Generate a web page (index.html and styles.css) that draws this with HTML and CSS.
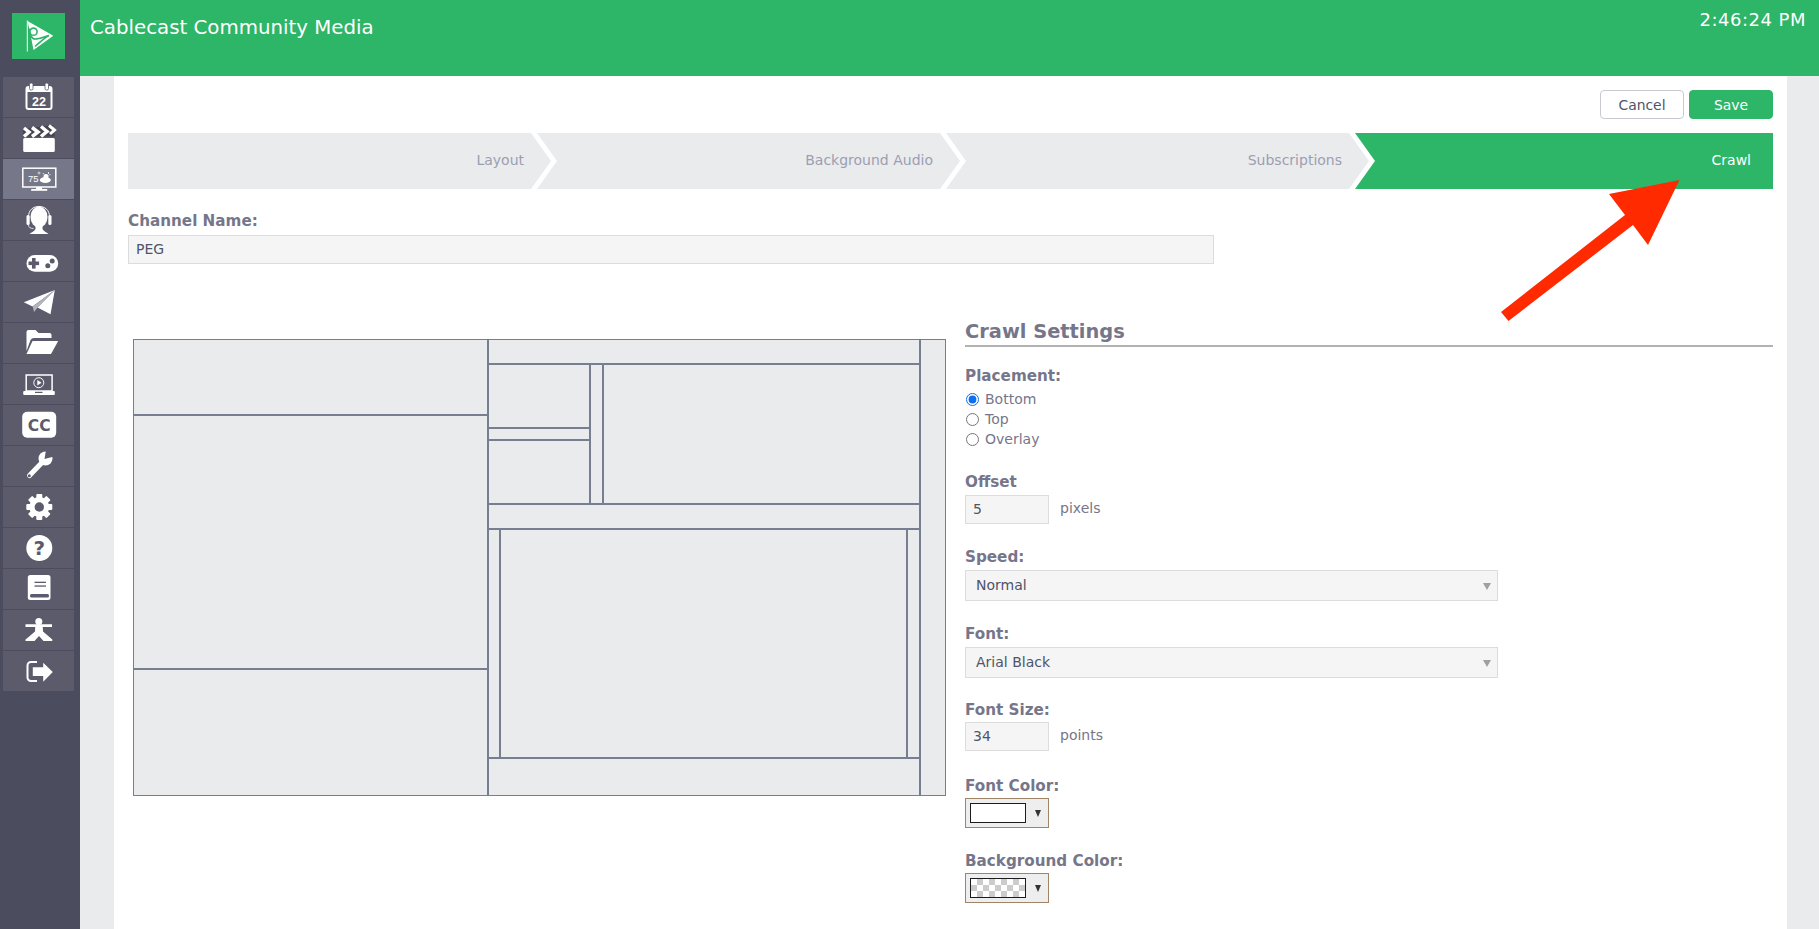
FILE: index.html
```html
<!DOCTYPE html>
<html lang="en">
<head>
<meta charset="utf-8">
<title>Cablecast Community Media</title>
<link rel="stylesheet" href="styles.css">
</head>
<body>
<div class="app">
  <nav class="sidebar">
    <div class="logo">
      <svg viewBox="0 0 53 46" width="53" height="46">
        <polygon points="15.5,8 41.3,22.7 21.5,37 19,24"/>
        <rect x="14.8" y="7.5" width="1" height="31"/>
        <circle class="lg-ring" cx="21.5" cy="18.7" r="3.6"/>
        <path class="lg-ring" d="M17 15.5c0 6 3 10.5 6 10.5 5 0 9.5-2.5 14-3.5-5 2.500-8 6-14 11"/>
      </svg>
    </div>
    <a class="nav-item"><svg viewBox="0 0 40 40" width="40" height="40">
      <rect class="o" x="7.500" y="10" width="25" height="22" rx="2" stroke-width="2"/>
      <rect x="7.500" y="10" width="25" height="5"/>
      <rect class="ring" x="10.500" y="6" width="3.500" height="7" rx="1.500"/>
      <rect class="ring" x="26" y="6" width="3.500" height="7" rx="1.500"/>
      <text class="t22" x="20" y="29">22</text>
    </svg></a>
    <a class="nav-item"><svg viewBox="0 0 40 40" width="40" height="40">
      <rect x="4.200" y="20" width="31.600" height="14" rx="1.500"/>
      <polygon class="d2" points="4.200,11 34,7 35.800,18.500 4.200,18.500"/>
      <polyline class="o" stroke-width="3.500" points="5,10 10,14 5,18.500"/>
      <polyline class="o" stroke-width="3.500" points="13,9.500 19,14 13,18.500"/>
      <polyline class="o" stroke-width="3.500" points="22,8.500 28,13.500 22,18.500"/>
      <polyline class="o" stroke-width="3" points="30,7.500 35.500,12 31,16"/>
    </svg></a>
    <a class="nav-item is-active"><svg viewBox="0 0 40 40" width="40" height="40">
      <rect class="o" x="3.800" y="9.200" width="33" height="18.800" stroke-width="1.500"/>
      <rect x="17" y="28" width="6" height="2.500"/>
      <rect x="12.200" y="30" width="16" height="1.800"/>
      <text class="t75" x="9" y="23">75</text>
      <circle class="o" cx="20" cy="14" r="1" stroke-width="0.600"/>
      <ellipse cx="26.300" cy="21" rx="5.500" ry="3"/>
      <circle cx="27" cy="17.500" r="2.500"/>
      <path class="o" stroke-width="0.800" d="M29.500 13v2M31.500 15l-1.500 1.500M24 14l1 1.500"/>
    </svg></a>
    <a class="nav-item"><svg viewBox="0 0 40 40" width="40" height="40">
      <ellipse cx="20" cy="17" rx="8.500" ry="10.500"/>
      <path class="o" stroke-width="1" d="M9.500 17C9.500 10 14 6.500 20 6.500S30.500 10 30.500 17"/>
      <rect x="7.500" y="15" width="3.200" height="10" rx="1.500"/>
      <rect x="29.300" y="15" width="3.200" height="10" rx="1.500"/>
      <path d="M16.500 26h7v3c1 2 4 3.500 6 5H10.500c2-1.500 5-3 6-5z"/>
      <path class="o" stroke-width="0.800" d="M9.500 25c0 2.500 2 3.500 5 3.500"/>
    </svg></a>
    <a class="nav-item"><svg viewBox="0 0 40 40" width="40" height="40">
      <rect x="7.500" y="14" width="31.700" height="16.700" rx="8.300"/>
      <rect class="d" x="13" y="17" width="3.600" height="10.600"/>
      <rect class="d" x="9.500" y="20.500" width="10.600" height="3.600"/>
      <circle class="d" cx="33.200" cy="20" r="2.500"/>
      <circle class="d" cx="28.800" cy="24.700" r="2.500"/>
    </svg></a>
    <a class="nav-item"><svg viewBox="0 0 40 40" width="40" height="40">
      <polygon points="35.800,8 4.800,20.300 13.500,24.500"/>
      <polygon points="35.800,8 18.500,25.500 31.500,32.300"/>
      <polygon class="g" points="35.800,8 13.800,24.500 15,30 19,25"/>
    </svg></a>
    <a class="nav-item"><svg viewBox="0 0 40 40" width="40" height="40">
      <path d="M7.500 28V9a2 2 0 0 1 2-2h7l3 3h11a2 2 0 0 1 2 2v3H15a4 4 0 0 0-3.500 2z"/>
      <path d="M13.500 18H39.200L32 31H7.500z"/>
    </svg></a>
    <a class="nav-item"><svg viewBox="0 0 40 40" width="40" height="40">
      <rect class="o" x="7.200" y="11" width="25.900" height="16" stroke-width="1.500"/>
      <rect x="4.200" y="27" width="31.600" height="4" rx="1"/>
      <rect class="d" x="16" y="27.800" width="7.500" height="1.200"/>
      <circle class="o" cx="19.800" cy="18.700" r="5" stroke-width="1"/>
      <polygon points="18.300,16 18.300,21.400 22.600,18.700"/>
    </svg></a>
    <a class="nav-item"><svg viewBox="0 0 40 40" width="40" height="40">
      <rect x="3.200" y="6.700" width="34" height="26" rx="5"/>
      <text class="tcc" x="20.200" y="25.500">CC</text>
    </svg></a>
    <a class="nav-item"><svg viewBox="0 0 40 40" width="40" height="40">
      <line class="o" stroke-width="5" stroke-linecap="round" x1="10.500" y1="29.500" x2="24" y2="15.500"/>
      <circle cx="26.500" cy="12.500" r="7"/>
      <polygon class="d" points="25.500,13 27,4 35,4 35,10.500"/>
      <circle class="d" cx="10.300" cy="29.700" r="1.500"/>
    </svg></a>
    <a class="nav-item"><svg viewBox="0 0 40 40" width="40" height="40">
      <circle cx="20.300" cy="20" r="10"/>
      <rect x="17.300" y="7" width="6" height="26" rx="1"/>
      <rect x="17.300" y="7" width="6" height="26" rx="1" transform="rotate(45 20.300 20)"/>
      <rect x="17.300" y="7" width="6" height="26" rx="1" transform="rotate(90 20.300 20)"/>
      <rect x="17.300" y="7" width="6" height="26" rx="1" transform="rotate(135 20.300 20)"/>
      <circle class="d" cx="20.300" cy="20" r="4.700"/>
    </svg></a>
    <a class="nav-item"><svg viewBox="0 0 40 40" width="40" height="40">
      <circle cx="20.300" cy="20" r="13"/>
      <text class="tq" x="20.300" y="27">?</text>
    </svg></a>
    <a class="nav-item"><svg viewBox="0 0 40 40" width="40" height="40">
      <rect x="8.800" y="6" width="22.700" height="25" rx="2.500"/>
      <rect class="d" x="15.500" y="12.700" width="11.500" height="1.300"/>
      <rect class="d" x="15.500" y="16.400" width="11.500" height="1.300"/>
      <rect class="d" x="11" y="25" width="19" height="3.500" rx="1.500"/>
    </svg></a>
    <a class="nav-item"><svg viewBox="0 0 40 40" width="40" height="40">
      <circle cx="19.800" cy="11.500" r="3.500"/>
      <path d="M6.500 14.300H33V17H23.800L24 21.500 31 27.500 33.300 29.500V31H24.500L20 26 15.500 31H6.500V29.500L9 27.500 16 21.500 16.200 17H6.500z"/>
    </svg></a>
    <a class="nav-item"><svg viewBox="0 0 40 40" width="40" height="40">
      <path class="o" stroke-width="2" d="M18 11h-6a3.500 3.500 0 0 0-3.500 3.500v12a3.500 3.500 0 0 0 3.500 3.500h6"/>
      <path class="d" d="M12 14.500h12v-5l12 11.500-12 11.500v-5H12z"/>
      <path d="M13.800 16.300h10.400v-4.600L33.800 21l-9.600 9.700V25H13.800z"/>
    </svg></a>
  </nav>

  <div class="main">
    <header class="topbar">
      <h1 class="brand">Cablecast Community Media</h1>
      <div class="clock">2:46:24 PM</div>
    </header>
    <div class="content">
      <section class="panel">
        <div class="actions">
          <button class="btn btn-cancel">Cancel</button>
          <button class="btn btn-save">Save</button>
        </div>
        <div class="steps">
          <div class="step step-first">Layout</div>
          <div class="step">Background Audio</div>
          <div class="step">Subscriptions</div>
          <div class="step step-current">Crawl</div>
        </div>

        <div class="field channel">
          <div class="label">Channel Name:</div>
          <div class="input input-wide">PEG</div>
        </div>

        <div class="editor">
          <div class="diagram">
            <div class="col col-left">
              <div class="pane pane-a"></div>
              <div class="pane pane-b"></div>
              <div class="pane pane-fill"></div>
            </div>
            <div class="col col-mid">
              <div class="pane pane-bar"></div>
              <div class="row row-upper">
                <div class="col col-stack">
                  <div class="pane pane-c"></div>
                  <div class="pane pane-d"></div>
                  <div class="pane pane-fill"></div>
                </div>
                <div class="pane pane-strip"></div>
                <div class="pane pane-fill"></div>
              </div>
              <div class="pane pane-bar"></div>
              <div class="row row-lower">
                <div class="pane pane-strip-s"></div>
                <div class="pane pane-fill"></div>
                <div class="pane pane-strip-r"></div>
              </div>
              <div class="pane pane-fill"></div>
            </div>
            <div class="pane col-right"></div>
          </div>

          <form class="settings">
            <h2 class="settings-title">Crawl Settings</h2>
            <div class="field f-placement">
              <div class="label">Placement:</div>
              <label class="radio"><input type="radio" name="placement" checked>Bottom</label>
              <label class="radio"><input type="radio" name="placement">Top</label>
              <label class="radio"><input type="radio" name="placement">Overlay</label>
            </div>
            <div class="field f-offset">
              <div class="label">Offset</div>
              <div class="inline"><div class="input input-small">5</div><span class="unit">pixels</span></div>
            </div>
            <div class="field f-speed">
              <div class="label">Speed:</div>
              <div class="input select">Normal</div>
            </div>
            <div class="field f-font">
              <div class="label">Font:</div>
              <div class="input select">Arial Black</div>
            </div>
            <div class="field f-size">
              <div class="label">Font Size:</div>
              <div class="inline"><div class="input input-small">34</div><span class="unit">points</span></div>
            </div>
            <div class="field f-color">
              <div class="label">Font Color:</div>
              <div class="swatch-btn"><span class="swatch"></span><span class="swatch-caret"></span></div>
            </div>
            <div class="field f-bg">
              <div class="label">Background Color:</div>
              <div class="swatch-btn"><span class="swatch swatch-clear"></span><span class="swatch-caret"></span></div>
            </div>
          </form>
        </div>
      </section>
    </div>
  </div>
</div>
<svg class="callout" viewBox="0 0 1819 929" width="1819" height="929">
  <polygon points="1501,312 1625,215 1609,194 1679.500,180 1648,245 1633,225 1508.500,321"/>
</svg>
</body>
</html>
```
FILE: styles.css
```css
* { box-sizing: border-box; }
html, body { margin: 0; height: 100%; overflow: hidden; }
body {
  font-family: "DejaVu Sans", Verdana, sans-serif;
  font-size: 14px;
  color: #4e5469;
  background: #eaebed;
}
.app { display: flex; height: 929px; }

/* sidebar */
.sidebar {
  width: 80px;
  flex: none;
  background: #4c4c5f;
  padding: 13px 6px 0 3px;
  display: flex;
  flex-direction: column;
}
.logo {
  width: 53px;
  height: 46px;
  margin: 0 0 18px 9px;
  background: #2db568;
}
.logo svg { display: block; fill: #fff; }
.lg-ring { fill: none; stroke: #2db568; stroke-width: 1.6; }
.nav-item {
  display: flex;
  justify-content: center;
  height: 40px;
  margin-bottom: 1px;
  background: #5b5b6c;
}
.nav-item.is-active { background: #77778a; }
.nav-item svg { display: block; fill: #fff; }
.o { fill: none; stroke: #fff; }
.d { fill: #5b5b6c; }
.d2 { fill: #44444f; }
.g { fill: #b4b4c0; }
.ring { stroke: #5b5b6c; stroke-width: 0.8; }
.t22 { font: bold 12.5px "Liberation Sans", sans-serif; text-anchor: middle; }
.t75 { font: 9.5px "Liberation Sans", sans-serif; }
.tcc { font: bold 15.5px "DejaVu Sans", sans-serif; text-anchor: middle; fill: #5b5b6c; }
.tq { font: bold 20px "DejaVu Sans", sans-serif; text-anchor: middle; fill: #5b5b6c; }

/* main */
.main { flex: 1; min-width: 0; display: flex; flex-direction: column; }
.topbar {
  height: 76px;
  flex: none;
  background: #2db568;
  color: #fff;
  display: flex;
  justify-content: space-between;
  align-items: flex-start;
  padding: 0 13px 0 10px;
}
.brand { margin: 15px 0 0; font-size: 19.800px; line-height: 26px; font-weight: 400; }
.clock { margin-top: 8px; font-size: 18px; line-height: 24px; letter-spacing: 0.5px; }
.content { flex: 1; min-height: 0; padding: 0 32px 0 34px; }
.panel { height: 100%; background: #fff; padding: 14px 14px 0; overflow: hidden; }

.actions { display: flex; justify-content: flex-end; gap: 5px; margin-bottom: 14px; }
.btn {
  width: 84px;
  height: 29px;
  border-radius: 4px;
  font: 13.900px "DejaVu Sans", Verdana, sans-serif;
  padding: 0;
}
.btn-cancel { background: #fff; border: 1px solid #c8cad0; color: #4e5469; }
.btn-save { background: #2db568; border: 1px solid #2db568; color: #fff; }

.steps { display: flex; height: 56px; }
.step {
  width: 423px;
  flex: none;
  margin-right: -14px;
  padding: 0 27px 2px 0;
  background: #eaebed;
  color: #9a9fb2;
  display: flex;
  align-items: center;
  justify-content: flex-end;
  clip-path: polygon(0 0, calc(100% - 20px) 0, 100% 50%, calc(100% - 20px) 100%, 0 100%, 20px 50%);
}
.step-first { clip-path: polygon(0 0, calc(100% - 20px) 0, 100% 50%, calc(100% - 20px) 100%, 0 100%); }
.step-current {
  flex: 1;
  width: auto;
  margin-right: 0;
  padding-right: 22px;
  background: #2db568;
  color: #fff;
  clip-path: polygon(0 0, 100% 0, 100% 100%, 0 100%, 20px 50%);
}

.label { font-weight: 700; font-size: 15.200px; line-height: 18px; color: #76768a; }
.input {
  height: 29px;
  background: #f5f5f5;
  border: 1px solid #dcdcdc;
  padding: 0 7px 2px;
  display: flex;
  align-items: center;
  color: #4e5469;
}
.channel { margin-top: 23px; }
.channel .label { margin-bottom: 5px; }
.input-wide { width: 1086px; }

.editor { display: flex; align-items: flex-start; gap: 19px; margin-top: 52px; }

/* diagram */
.diagram {
  width: 813px;
  height: 457px;
  margin: 23px 0 0 5px;
  flex: none;
  display: flex;
  gap: 2px;
  padding: 1px;
  background: #787e91;
}
.col { display: flex; flex-direction: column; gap: 2px; }
.row { display: flex; gap: 2px; }
.pane { background: #eaebed; }
.pane-fill { flex: 1; }
.col-left { width: 353px; }
.col-mid { flex: 1; }
.col-right { width: 24px; }
.pane-a { height: 74px; }
.pane-b { height: 252px; }
.pane-bar { height: 23px; }
.row-upper { height: 138px; }
.col-stack { width: 100px; }
.pane-c { height: 62px; }
.pane-d { height: 10px; }
.pane-strip { width: 11px; }
.row-lower { height: 227px; }
.pane-strip-s { width: 10px; }
.pane-strip-r { width: 11px; }

/* settings */
.settings { flex: 1; min-width: 0; }
.settings-title {
  margin: 0 0 20px;
  height: 31px;
  font-size: 19.400px;
  line-height: 32px;
  color: #76768a;
  border-bottom: 2px solid #b2b2b2;
}
.radio {
  display: flex;
  align-items: center;
  height: 20px;
  color: #76768a;
}
.radio input { width: 13px; height: 13px; margin: 0 6px 0 1px; accent-color: #0a6ff0; }
.f-placement .label { margin-bottom: 4px; }
.f-offset { margin-top: 24px; }
.f-offset .label { margin-bottom: 4px; }
.f-size .label { margin-bottom: 3px; }
.f-speed { margin-top: 24px; }
.f-speed .label, .f-font .label { margin-bottom: 4px; }
.f-color .label, .f-bg .label { margin-bottom: 3px; }
.f-font { margin-top: 24px; }
.f-size { margin-top: 23px; }
.f-color { margin-top: 26px; }
.f-bg { margin-top: 24px; }
.inline { display: flex; align-items: center; gap: 11px; }
.input-small { width: 84px; }
.unit { color: #76768a; padding-bottom: 3px; }
.select {
  width: 533px;
  height: 31px;
  padding: 0 10px 2px;
  position: relative;
}
.select::after {
  content: "";
  position: absolute;
  right: 6px;
  top: 12px;
  border-left: 4px solid transparent;
  border-right: 4px solid transparent;
  border-top: 7px solid #a0a0a0;
}
.swatch-btn {
  width: 84px;
  height: 30px;
  background: #eeeeee;
  border: 1px solid #a08468;
  padding: 4px;
  display: flex;
  align-items: center;
  gap: 9px;
}
.swatch {
  width: 56px;
  height: 20px;
  background: #fff;
  border: 1px solid #1c1c1c;
}
.swatch-clear {
  background-color: #fff;
  background-image: conic-gradient(#ccc 25%, #fff 25% 50%, #ccc 50% 75%, #fff 75%);
  background-size: 12px 12px;
}
.swatch-caret {
  border-left: 3.5px solid transparent;
  border-right: 3.5px solid transparent;
  border-top: 7px solid #333;
}

.callout { position: absolute; left: 0; top: 0; pointer-events: none; }
.callout polygon { fill: #ff2a00; }
```
